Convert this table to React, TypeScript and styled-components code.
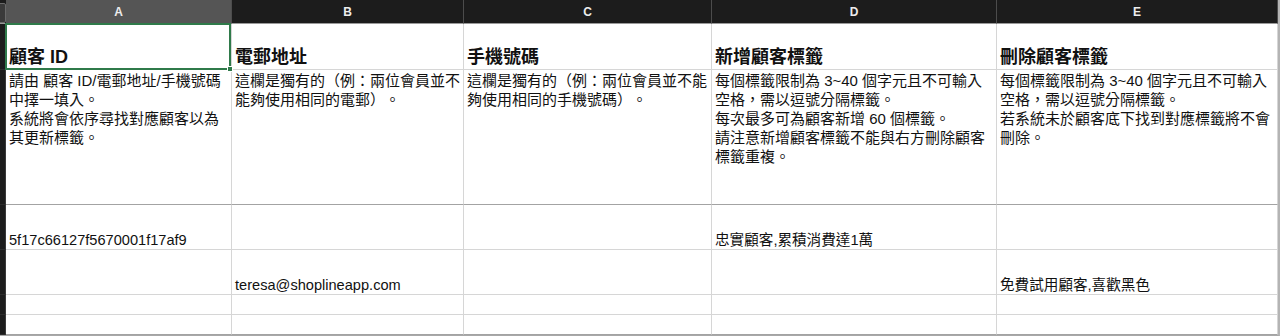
import React from 'react';
import styled, { createGlobalStyle } from 'styled-components';

const GlobalStyle = createGlobalStyle`
  html, body {
    margin: 0;
    padding: 0;
    background: #ffffff;
  }
  * {
    box-sizing: border-box;
  }
`;

const FONT = `"Liberation Sans", "Noto Sans CJK TC", "Noto Sans", sans-serif`;

type Column = {
  key: string;
  title: string;
  note: string[];
};

const columns: Column[] = [
  {
    key: 'A',
    title: '顧客 ID',
    note: ['請由 顧客 ID/電郵地址/手機號碼', '中擇一填入。', '系統將會依序尋找對應顧客以為', '其更新標籤。'],
  },
  {
    key: 'B',
    title: '電郵地址',
    note: ['這欄是獨有的（例：兩位會員並不', '能夠使用相同的電郵）。'],
  },
  {
    key: 'C',
    title: '手機號碼',
    note: ['這欄是獨有的（例：兩位會員並不能', '夠使用相同的手機號碼）。'],
  },
  {
    key: 'D',
    title: '新增顧客標籤',
    note: [
      '每個標籤限制為 3~40 個字元且不可輸入',
      '空格，需以逗號分隔標籤。',
      '每次最多可為顧客新增 60 個標籤。',
      '請注意新增顧客標籤不能與右方刪除顧客',
      '標籤重複。',
    ],
  },
  {
    key: 'E',
    title: '刪除顧客標籤',
    note: ['每個標籤限制為 3~40 個字元且不可輸入', '空格，需以逗號分隔標籤。', '若系統未於顧客底下找到對應標籤將不會', '刪除。'],
  },
];

const dataRows: { values: string[] }[] = [
  { values: ['5f17c66127f5670001f17af9', '', '', '忠實顧客,累積消費達1萬', ''] },
  { values: ['', 'teresa@shoplineapp.com', '', '', '免費試用顧客,喜歡黑色'] },
  { values: ['', '', '', '', ''] },
  { values: ['', '', '', '', ''] },
];

const Sheet = styled.div`
  display: grid;
  grid-template-columns: 6px 226px 232px 248px 285px 281px;
  grid-template-rows: 24px 46px 135px 45px 45px 20px 20px;
  width: 1280px;
  height: 336px;
  border-right: 2px solid #b4b4b4;
  border-bottom: 1px solid #a8a8a8;
  font-family: ${FONT};
  color: #111111;
  overflow: hidden;
  text-spacing-trim: space-all;
`;

const Corner = styled.div`
  background: #1c1c1c;
  border-bottom: 1px solid #9a9a9a;
  position: relative;
  &::after {
    content: '';
    position: absolute;
    left: -2px;
    top: 3px;
    width: 6px;
    height: 18px;
    border: 1px solid #6a6a6a;
    border-radius: 2px;
    background: #3a3a3a;
  }
`;

const Gutter = styled.div`
  background: #1c1c1c;
  border-right: 1px solid #3a3a3a;
  border-bottom: 1px solid #2c2c2c;
`;

const ColumnHeader = styled.div<{ $selected?: boolean }>`
  display: flex;
  align-items: center;
  justify-content: center;
  background: ${(p) => (p.$selected ? '#555555' : '#1c1c1c')};
  color: #ececec;
  font-size: 12px;
  font-weight: 700;
  border-right: 1px solid #4c4c4c;
  border-bottom: 1px solid #9a9a9a;
`;

const Cell = styled.div<{ $align: 'top' | 'bottom'; $strongBottom?: boolean; $active?: boolean }>`
  position: relative;
  display: flex;
  flex-direction: column;
  justify-content: ${(p) => (p.$align === 'top' ? 'flex-start' : 'flex-end')};
  padding: ${(p) => (p.$align === 'top' ? '1px 2px 0 3px' : '0 2px 0 3px')};
  border-right: 1px solid #d6d6d6;
  border-bottom: ${(p) => (p.$strongBottom ? '1px solid #a3a3a3' : '1px solid #d6d6d6')};
  overflow: ${(p) => (p.$active ? 'visible' : 'hidden')};
  z-index: ${(p) => (p.$active ? 2 : 'auto')};
  white-space: nowrap;
`;

const Title = styled.div`
  font-size: 18px;
  font-weight: 700;
  line-height: 22px;
  padding-bottom: 1px;
`;

const NoteLine = styled.div`
  font-size: 15px;
  line-height: 19px;
`;

const Value = styled.div`
  font-size: 14.6px;
  line-height: 17px;
`;

const Selection = styled.div`
  position: absolute;
  inset: -1px 0 -1px -1px;
  border: 2px solid #2f7a4a;
  pointer-events: none;
`;

const FillHandle = styled.div`
  position: absolute;
  right: -4px;
  bottom: -4px;
  width: 6px;
  height: 6px;
  background: #2f7a4a;
  border: 1px solid #ffffff;
`;

const App: React.FC = () => (
  <>
    <GlobalStyle />
    <Sheet>
      <Corner />
      {columns.map((col, idx) => (
        <ColumnHeader key={col.key} $selected={idx === 0}>
          {col.key}
        </ColumnHeader>
      ))}

      <Gutter />
      {columns.map((col, idx) => (
        <Cell key={col.key} $align='bottom' $active={idx === 0}>
          <Title>{col.title}</Title>
          {idx === 0 && (
            <Selection>
              <FillHandle />
            </Selection>
          )}
        </Cell>
      ))}

      <Gutter />
      {columns.map((col) => (
        <Cell key={col.key} $align='top' $strongBottom>
          {col.note.map((line, i) => (
            <NoteLine key={i}>{line}</NoteLine>
          ))}
        </Cell>
      ))}

      {dataRows.map((row, r) => (
        <React.Fragment key={r}>
          <Gutter />
          {row.values.map((value, c) => (
            <Cell key={c} $align='bottom' $strongBottom={r === dataRows.length - 1}>
              {value && <Value>{value}</Value>}
            </Cell>
          ))}
        </React.Fragment>
      ))}
    </Sheet>
  </>
);

export default App;
